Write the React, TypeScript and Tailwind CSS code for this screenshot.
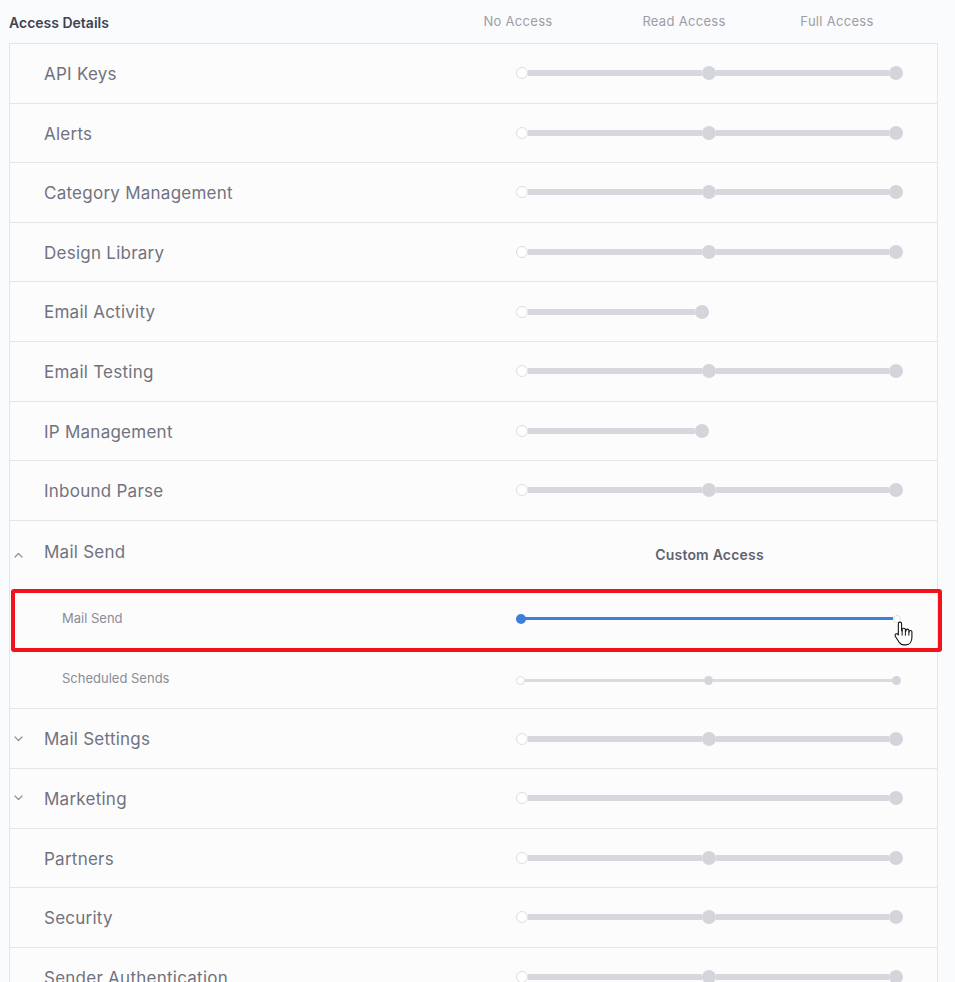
import React from 'react';

type Kind = 'three' | 'short' | 'long';

interface Row {
  name: string;
  kind: Kind;
  chevron?: 'down';
}

const topRows: Row[] = [
  { name: 'API Keys', kind: 'three' },
  { name: 'Alerts', kind: 'three' },
  { name: 'Category Management', kind: 'three' },
  { name: 'Design Library', kind: 'three' },
  { name: 'Email Activity', kind: 'short' },
  { name: 'Email Testing', kind: 'three' },
  { name: 'IP Management', kind: 'short' },
  { name: 'Inbound Parse', kind: 'three' },
];

const bottomRows: Row[] = [
  { name: 'Mail Settings', kind: 'three', chevron: 'down' },
  { name: 'Marketing', kind: 'long', chevron: 'down' },
  { name: 'Partners', kind: 'three' },
  { name: 'Security', kind: 'three' },
  { name: 'Sender Authentication', kind: 'three' },
];

function Chevron({ up }: { up?: boolean }) {
  return (
    <div className="flex w-[25px] justify-end pr-[12px]">
      <svg width="9" height="6" viewBox="0 0 9 6">
        <path
          d={up ? 'M1 5 L4.5 1.5 L8 5' : 'M1 1 L4.5 4.5 L8 1'}
          fill="none"
          stroke="#8d909a"
          strokeWidth="1.2"
          strokeLinecap="round"
          strokeLinejoin="round"
        />
      </svg>
    </div>
  );
}

function Slider({ kind }: { kind: Kind }) {
  const short = kind === 'short';
  return (
    <div className={`flex items-center ${short ? 'w-[193px]' : 'w-[387px]'}`}>
      <div className="h-[12px] w-[12px] shrink-0 rounded-full border border-[#dcdde2] bg-white" />
      <div className="h-[6px] flex-1 bg-[#d7d8dd]" />
      {kind === 'three' && (
        <>
          <div className="h-[14px] w-[14px] shrink-0 rounded-full bg-[#d4d5db]" />
          <div className="h-[6px] flex-1 bg-[#d7d8dd]" />
        </>
      )}
      <div className="h-[14px] w-[14px] shrink-0 rounded-full bg-[#d4d5db]" />
    </div>
  );
}

function ThinSlider({ active }: { active?: boolean }) {
  if (active) {
    return (
      <div className="flex w-[385px] items-center">
        <div className="h-[10px] w-[10px] shrink-0 rounded-full bg-[#3d80dc]" />
        <div className="-ml-[1px] h-[3px] flex-1 bg-[#3d80dc]" />
        <div className="h-[8px] w-[8px] shrink-0 rounded-full border border-[#dfe0e4] bg-white" />
      </div>
    );
  }
  return (
    <div className="flex w-[385px] items-center pt-[3px]">
      <div className="h-[9px] w-[9px] shrink-0 rounded-full border border-[#dcdde2] bg-white" />
      <div className="h-[3px] flex-1 bg-[#dadbe0]" />
      <div className="h-[9px] w-[9px] shrink-0 rounded-full bg-[#d4d5db]" />
      <div className="h-[3px] flex-1 bg-[#dadbe0]" />
      <div className="h-[9px] w-[9px] shrink-0 rounded-full bg-[#d4d5db]" />
    </div>
  );
}

function TableRow({ row }: { row: Row }) {
  return (
    <div className="flex h-[59.6px] items-center border-b border-[#e4e5e9]">
      {row.chevron ? <Chevron /> : <div className="w-[25px]" />}
      <div className="w-[481px] pl-[9px] pt-[3px] text-[17px] tracking-[0.25px] text-[#70737f]">{row.name}</div>
      <Slider kind={row.kind} />
    </div>
  );
}

function HandCursor() {
  return (
    <svg
      width="19"
      height="27"
      viewBox="0 0 17.5 23"
      className="absolute left-[894px] top-[620px]"
    >
      <path
        d="M5.5 1 C6.3 1 7 1.7 7 2.5 V9 H7.5 V8 C7.5 7.2 8.2 6.6 9 6.6 C9.8 6.6 10.5 7.2 10.5 8 V9.5 H11 V8.8 C11 8 11.7 7.5 12.4 7.5 C13.1 7.5 13.7 8 13.7 8.8 V10 H14 C14 9.3 14.6 8.8 15.2 8.8 C15.9 8.8 16.5 9.3 16.5 10 V15 C16.5 18.8 14.5 22 11 22 H9 C7 22 5.7 21 4.6 19.4 L1.3 14.2 C0.8 13.4 1 12.4 1.7 12 C2.4 11.6 3.3 11.8 3.8 12.5 L4 12.8 V2.5 C4 1.7 4.7 1 5.5 1 Z"
        fill="#ffffff"
        stroke="#111111"
        strokeWidth="1"
        strokeLinejoin="round"
      />
      <path d="M7.5 9 V13.5 M10.5 9.5 V13.5 M13.7 10 V13.5" stroke="#111111" strokeWidth="0.9" fill="none" />
    </svg>
  );
}

export default function App() {
  return (
    <div
      className="relative h-[982px] w-[955px] overflow-hidden bg-[#fafbfc]"
      style={{ fontFamily: 'Inter, "Noto Sans", sans-serif' }}
    >
      <div className="flex h-[43px] items-center pt-[1px]">
        <div className="w-[468px] pl-[9px] text-[14px] font-semibold text-[#3e4351]">Access Details</div>
        <div className="w-[100px] text-center text-[13px] tracking-[0.3px] text-[#9c9da5]">No Access</div>
        <div className="ml-[66px] w-[100px] text-center text-[13px] tracking-[0.3px] text-[#9c9da5]">Read Access</div>
        <div className="ml-[53px] w-[100px] text-center text-[13px] tracking-[0.3px] text-[#9c9da5]">Full Access</div>
      </div>

      <div className="ml-[9px] w-[929px] border-x border-t border-[#e4e5e9] bg-[#fcfcfd]">
        {topRows.map((r) => (
          <TableRow key={r.name} row={r} />
        ))}

        <div className="border-b border-[#e4e5e9]">
          <div className="flex h-[68px] items-center">
            <Chevron up />
            <div className="w-[481px] pb-[4px] pl-[9px] text-[17px] tracking-[0.25px] text-[#70737f]">Mail Send</div>
            <div className="w-[387px] text-center text-[14px] font-semibold tracking-[0.2px] text-[#5f6371]">Custom Access</div>
          </div>
          <div className="flex h-[60px] items-center">
            <div className="w-[506px] pl-[52px] text-[13px] text-[#8a8c96]">Mail Send</div>
            <ThinSlider active />
          </div>
          <div className="flex h-[59.6px] items-center">
            <div className="w-[506px] pl-[52px] text-[13px] text-[#8a8c96]">Scheduled Sends</div>
            <ThinSlider />
          </div>
        </div>

        {bottomRows.map((r) => (
          <TableRow key={r.name} row={r} />
        ))}
      </div>

      <div className="absolute left-[11px] top-[589px] h-[63px] w-[931px] rounded-[3px] border-[4px] border-[#f2121c]" />
      <HandCursor />
    </div>
  );
}
